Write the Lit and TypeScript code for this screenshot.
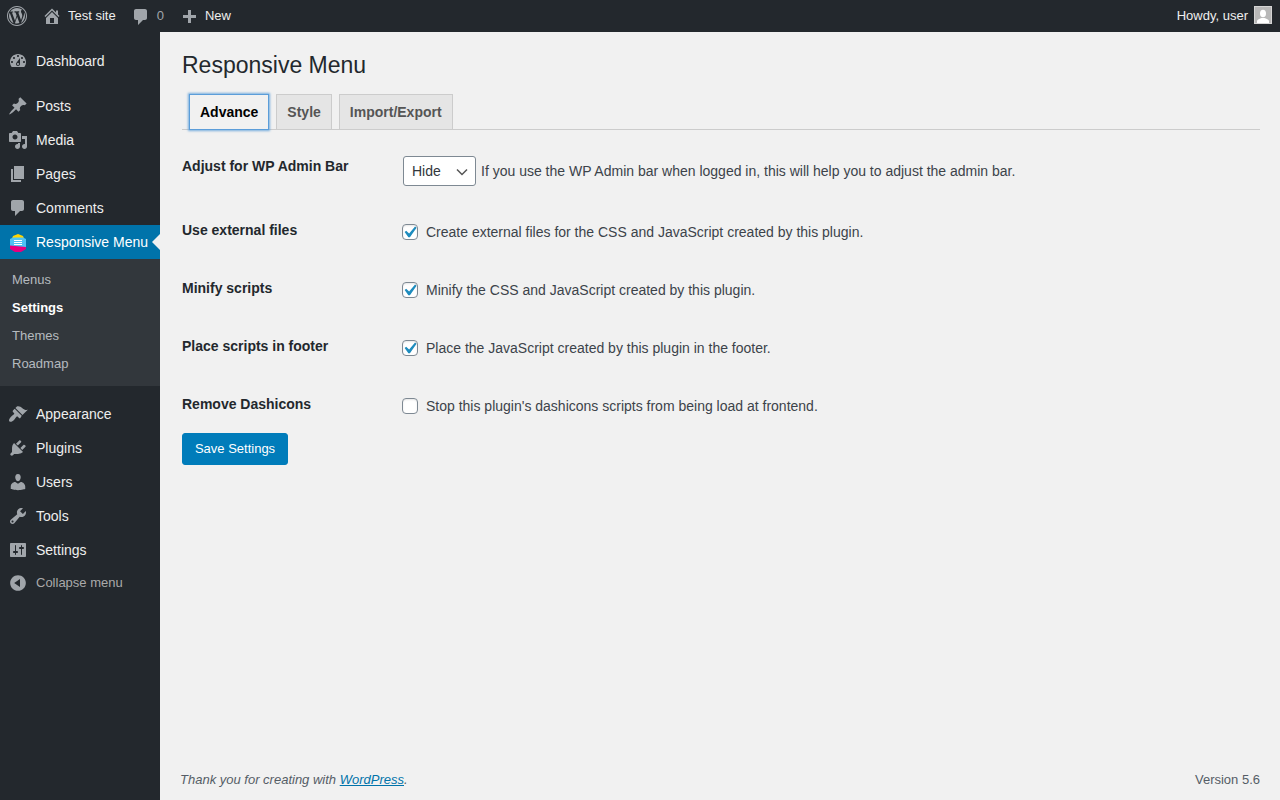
import { LitElement, html, css, svg } from "lit";
import { customElement } from "lit/decorators.js";

const ICONS: Record<string, string> = {
  wp: "M20 10c0-5.52-4.48-10-10-10S0 4.48 0 10s4.48 10 10 10 10-4.48 10-10zM10 1.01c4.96 0 8.99 4.03 8.99 8.99s-4.03 8.99-8.99 8.99S1.01 14.96 1.01 10 5.04 1.01 10 1.01zM8.01 14.82L4.96 6.61c.49-.03 1.05-.08 1.05-.08.43-.05.38-1.01-.06-.99 0 0-1.29.1-2.13.1-.15 0-.33 0-.52-.01 1.44-2.17 3.9-3.6 6.7-3.6 2.09 0 3.99.79 5.41 2.09-.6-.08-1.45.35-1.45 1.42 0 .66.38 1.22.79 1.88.31.54.5 1.22.5 2.21 0 1.34-1.27 4.48-1.27 4.48l-2.71-7.5c.48-.03.75-.16.75-.16.43-.05.38-1.1-.05-1.08 0 0-1.3.11-2.14.11-.78 0-2.11-.11-2.11-.11-.43-.02-.48 1.06-.05 1.08l.84.08 1.12 3.04zm6.02 2.15L16.64 10s.67-1.69.39-3.81c.63 1.14.94 2.42.94 3.81 0 2.96-1.56 5.58-3.94 7.01zM2.68 6.77L6.5 17.25c-2.67-1.3-4.47-4.08-4.47-7.25 0-1.16.2-2.23.65-3.23zm7.45 4.09l2.29 6.25c-.75.27-1.57.42-2.42.42-.72 0-1.41-.11-2.06-.3z",
  home: "M16 8.5l1.53 1.53-1.06 1.06L10 4.62l-6.47 6.47-1.06-1.06L10 2.5l4 4v-2h2v4zm-6-2.46l6 5.99V18H4v-5.97zM12 17v-5H8v5h4z",
  comment: "M5 2h9c1.1 0 2 .9 2 2v7c0 1.1-.9 2-2 2h-2l-5 5v-5H5c-1.1 0-2-.9-2-2V4c0-1.1.9-2 2-2z",
  plus: "M17 7v3h-5v5H9v-5H4V7h5V2h3v5h5z",
  dashboard: "M3.76 16h12.48c1.1-1.37 1.76-3.11 1.76-5 0-4.42-3.58-8-8-8s-8 3.58-8 8c0 1.89.66 3.63 1.76 5zM10 4c.55 0 1 .45 1 1s-.45 1-1 1-1-.45-1-1 .45-1 1-1zM6 6c.55 0 1 .45 1 1s-.45 1-1 1-1-.45-1-1 .45-1 1-1zm8 0c.55 0 1 .45 1 1s-.45 1-1 1-1-.45-1-1 .45-1 1-1zm-5.37 5.55L12 7v6c0 1.1-.9 2-2 2s-2-.9-2-2c0-.57.24-1.08.63-1.45zM4 10c.55 0 1 .45 1 1s-.45 1-1 1-1-.45-1-1 .45-1 1-1zm12 0c.55 0 1 .45 1 1s-.45 1-1 1-1-.45-1-1 .45-1 1-1zm-5 3c0-.55-.45-1-1-1s-1 .45-1 1 .45 1 1 1 1-.45 1-1z",
  post: "M10.44 3.02l1.82-1.82 6.36 6.35-1.83 1.82c-1.05-.68-2.48-.57-3.41.36l-.75.75c-.92.93-1.04 2.35-.35 3.41l-1.83 1.82-2.41-2.41-2.8 2.79c-.42.42-3.38 2.71-3.8 2.29s1.86-3.39 2.28-3.81l2.79-2.79L4.1 9.36l1.83-1.82c1.05.69 2.48.57 3.4-.36l.75-.75c.93-.92 1.05-2.35.36-3.41z",
  media: "M13 11V4c0-.55-.45-1-1-1h-1.67L9 1H5L3.67 3H2c-.55 0-1 .45-1 1v7c0 .55.45 1 1 1h10c.55 0 1-.45 1-1zM7 4.5c1.38 0 2.5 1.12 2.5 2.5S8.38 9.5 7 9.5 4.5 8.38 4.5 7 5.62 4.5 7 4.5zM14 6h5v10.5c0 1.38-1.12 2.5-2.5 2.5S14 17.88 14 16.5s1.12-2.5 2.5-2.5c.17 0 .34.02.5.05V9h-3V6zm-4 8.05V13h2v3.5c0 1.38-1.12 2.5-2.5 2.5S7 17.88 7 16.5 8.12 14 9.5 14c.17 0 .34.02.5.05z",
  page: "M6 15V2h10v13H6zm-1 1h8v2H3V5h2v11z",
  appearance: "M14.48 11.06L7.41 3.99l1.5-1.5c.5-.56 2.3-.47 3.51.32 1.21.8 1.43 1.28 2.91 2.1 1.18.64 2.45 1.26 4.45.85zm-.71.71L6.7 4.7 4.93 6.47c-.39.39-.39 1.02 0 1.41l1.06 1.06c.39.39.39 1.03 0 1.42-.6.6-1.43 1.11-2.21 1.69-.35.26-.7.53-1.01.84-1.43 1.43-2.4 3.41-1.31 4.5 1.09 1.09 3.07.12 4.5-1.31.31-.31.58-.66.84-1.01.58-.78 1.09-1.61 1.69-2.21.39-.39 1.03-.39 1.42 0l1.06 1.06c.39.39 1.02.39 1.41 0z",
  plugin: "M13.11 4.36L9.87 7.6 8 5.73l3.24-3.24c.35-.34 1.05-.2 1.56.32.52.51.66 1.21.31 1.55zm-8 1.77l.91-1.12 9.01 9.01-1.19.84c-.71.71-2.63 1.16-3.82 1.16H6.14L4.9 17.26c-.59.59-1.54.59-2.12 0-.59-.58-.59-1.53 0-2.12l1.24-1.24v-3.88c0-1.13.4-3.19 1.09-3.89zm7.26 3.97l3.24-3.24c.34-.35 1.04-.21 1.55.31.52.51.66 1.21.31 1.55l-3.24 3.25z",
  users: "M10 9.25c-2.27 0-2.73-3.44-2.73-3.44C7 4.02 7.82 2 9.97 2c2.16 0 2.98 2.02 2.71 3.81 0 0-.41 3.44-2.68 3.44zm0 2.57L12.72 10c2.39 0 4.52 2.33 4.52 4.53v2.49s-3.65 1.13-7.24 1.13c-3.65 0-7.24-1.13-7.24-1.13v-2.49c0-2.25 1.94-4.48 4.47-4.48z",
  tools: "M16.68 9.77c-1.34 1.34-3.3 1.67-4.95.99l-5.41 6.52c-.99.99-2.59.99-3.58 0s-.99-2.59 0-3.57l6.52-5.42c-.68-1.65-.35-3.61.99-4.95 1.28-1.28 3.12-1.62 4.72-1.06l-2.89 2.89 2.82 2.82 2.86-2.87c.53 1.58.18 3.39-1.08 4.65zM3.81 16.21c.4.39 1.04.39 1.43 0 .4-.4.4-1.04 0-1.43-.39-.4-1.03-.4-1.43 0-.39.39-.39 1.03 0 1.43z",
  settings: "M18 16V4c0-.55-.45-1-1-1H3c-.55 0-1 .45-1 1v12c0 .55.45 1 1 1h14c.55 0 1-.45 1-1zM8 11h1c.55 0 1 .45 1 1s-.45 1-1 1H8v1.5c0 .28-.22.5-.5.5s-.5-.22-.5-.5V13H6c-.55 0-1-.45-1-1s.45-1 1-1h1V5.5c0-.28.22-.5.5-.5s.5.22.5.5V11zm5-2h-1c-.55 0-1-.45-1-1s.45-1 1-1h1V5.5c0-.28.22-.5.5-.5s.5.22.5.5V7h1c.55 0 1 .45 1 1s-.45 1-1 1h-1v5.5c0 .28-.22.5-.5.5s-.5-.22-.5-.5V9z",
  collapse: "M10 2.16c4.33 0 7.84 3.51 7.84 7.84s-3.51 7.84-7.84 7.84S2.16 14.33 2.16 10 5.71 2.16 10 2.16zm2 11.72V6.12L6.18 9.97z",
};

const icon = (name: string) => html`<svg class="icon" viewBox="0 0 20 20" aria-hidden="true">
  <path fill-rule="evenodd" d=${ICONS[name]}></path>
</svg>`;

const rmIcon = html`<svg class="icon" viewBox="0 0 20 20" aria-hidden="true">
  ${svg`
    <path fill="#ffd400" d="M5 4 10 2l5 2 1 2.500H4z"></path>
    <path fill="#4cc3f5" d="M2 7 5 5.500h10L18 7v8H2z"></path>
    <path fill="#e6007e" d="M2 13.500 18 15v2l-5 3H7l-5-3z"></path>
    <path fill="#fff" d="M6 8h8v1H6zm0 2h8v1H6zm0 2h8v1H6z"></path>
  `}
</svg>`;

const TOP_MENU = [{ label: "Dashboard", icon: "dashboard" }];
const MID_MENU = [
  { label: "Posts", icon: "post" },
  { label: "Media", icon: "media" },
  { label: "Pages", icon: "page" },
  { label: "Comments", icon: "comment" },
];
const LOW_MENU = [
  { label: "Appearance", icon: "appearance" },
  { label: "Plugins", icon: "plugin" },
  { label: "Users", icon: "users" },
  { label: "Tools", icon: "tools" },
  { label: "Settings", icon: "settings" },
];

const OPTIONS = [
  { label: "Use external files", text: "Create external files for the CSS and JavaScript created by this plugin.", checked: true },
  { label: "Minify scripts", text: "Minify the CSS and JavaScript created by this plugin.", checked: true },
  { label: "Place scripts in footer", text: "Place the JavaScript created by this plugin in the footer.", checked: true },
  { label: "Remove Dashicons", text: "Stop this plugin's dashicons scripts from being load at frontend.", checked: false },
];

@customElement("app-root")
export class AppRoot extends LitElement {
  static styles = css`
    :host {
      display: block;
      width: 1280px;
      height: 800px;
      overflow: hidden;
      background: #f1f1f1;
      color: #3c434a;
      font-family: "Liberation Sans", Arial, sans-serif;
      font-size: 14px;
    }
    * {
      box-sizing: border-box;
    }
    .icon {
      display: block;
      width: 20px;
      height: 20px;
      fill: currentColor;
    }

    /* admin bar */
    .adminbar {
      display: flex;
      align-items: center;
      height: 32px;
      background: #23282d;
      color: #eee;
      font-size: 13px;
    }
    .bar-item {
      display: flex;
      align-items: center;
    }
    .bar-item .icon {
      color: #a0a5aa;
    }
    .bar-logo {
      margin-left: 7px;
    }
    .bar-home {
      margin-left: 15px;
    }
    .bar-home span {
      margin-left: 6px;
      transform: translateY(-1px);
    }
    .bar-comments {
      margin-left: 15px;
      color: #a0a5aa;
    }
    .bar-comments .icon {
      transform: translateY(1px);
    }
    .bar-comments span {
      margin-left: 6px;
      transform: translateY(-1px);
    }
    .bar-new {
      margin-left: 15px;
    }
    .bar-new .icon {
      transform: translateY(2px);
    }
    .bar-new span {
      margin-left: 6px;
      transform: translateY(-1px);
    }
    .bar-user {
      margin-left: auto;
      margin-right: 8px;
    }
    .bar-user span {
      transform: translateY(-1px);
    }
    .avatar {
      display: block;
      width: 18px;
      height: 18px;
      margin-left: 6px;
      transform: translateY(-1px);
    }

    .body {
      display: flex;
      height: 768px;
    }

    /* sidebar */
    .sidebar {
      flex: none;
      width: 160px;
      padding-top: 12px;
      background: #23282d;
      color: #eee;
    }
    .menu-item {
      position: relative;
      display: flex;
      align-items: center;
      height: 34px;
    }
    .menu-item .icon {
      flex: none;
      width: 20px;
      height: 20px;
      margin: 0 8px;
      color: #a0a5aa;
    }
    .menu-item.current {
      background: #0073aa;
      color: #fff;
    }
    .menu-item.current::after {
      content: "";
      position: absolute;
      right: 0;
      top: 9px;
      border: 8px solid transparent;
      border-right-color: #f1f1f1;
      border-left-width: 0;
    }
    .separator {
      height: 11px;
    }
    .submenu {
      padding: 7px 0 8px;
      margin-bottom: 11px;
      background: #32373c;
      font-size: 13px;
      color: rgba(240, 245, 250, 0.7);
    }
    .submenu div {
      height: 28px;
      padding-left: 12px;
      line-height: 27px;
    }
    .submenu .current {
      color: #fff;
      font-weight: 700;
    }
    .collapse {
      display: flex;
      align-items: center;
      height: 30px;
      color: #aaa;
      font-size: 13px;
    }
    .collapse .icon {
      flex: none;
      margin: 0 8px;
      color: #a0a5aa;
      transform: translateY(1px);
    }

    /* content */
    .main {
      flex: 1;
      display: flex;
      flex-direction: column;
      padding: 0 20px 0 20px;
    }
    .wrap {
      padding-left: 2px;
    }
    h1 {
      margin: 0;
      padding: 19px 0 13px;
      font-size: 23px;
      font-weight: 400;
      line-height: 29.9px;
      color: #23282d;
    }
    .tabs {
      display: flex;
      align-items: flex-start;
      height: 36px;
      border-bottom: 1px solid #ccc;
    }
    .tab {
      height: 35px;
      margin-left: 7px;
      padding: 0 10px;
      border: 1px solid #ccc;
      border-bottom: 0;
      background: #e5e5e5;
      color: #555;
      font-size: 14px;
      font-weight: 700;
      line-height: 35px;
    }
    .tab.active {
      height: 36px;
      border-color: #5b9dd9;
      border-bottom: 1px solid #5b9dd9;
      background: #f1f1f1;
      color: #000;
      box-shadow: 0 0 2px 1px rgba(91, 157, 217, 0.8);
    }
    .form {
      padding-top: 7px;
    }
    .row {
      display: grid;
      grid-template-columns: 220px 1fr;
      height: 58px;
    }
    .row.first {
      height: 64px;
    }
    .row label {
      padding-top: 20px;
      font-weight: 700;
      line-height: 18px;
      color: #23282d;
    }
    .control {
      display: flex;
      align-items: center;
      height: 16px;
      margin-top: 23px;
    }
    .first .control {
      height: 30px;
      margin-top: 19px;
      padding-left: 1px;
    }
    select {
      appearance: none;
      width: 73px;
      height: 30px;
      margin: 0 5px 0 0;
      padding: 0 24px 0 8px;
      border: 1px solid #7e8993;
      border-radius: 3px;
      background: #fff
        url('data:image/svg+xml;charset=US-ASCII,%3Csvg%20width%3D%2212%22%20height%3D%228%22%20xmlns%3D%22http%3A%2F%2Fwww.w3.org%2F2000%2Fsvg%22%3E%3Cpath%20d%3D%22M1%201.500l5%205%205-5%22%20fill%3D%22none%22%20stroke%3D%22%23555%22%20stroke-width%3D%221.500%22%2F%3E%3C%2Fsvg%3E')
        no-repeat right 7px top 11px / 12px 8px;
      color: #32373c;
      font-family: inherit;
      font-size: 14px;
    }
    input[type="checkbox"] {
      appearance: none;
      flex: none;
      width: 16px;
      height: 16px;
      margin: 0 8px 0 0;
      border: 1px solid #7e8993;
      border-radius: 4px;
      background: #fff;
      box-shadow: inset 0 1px 2px rgba(0, 0, 0, 0.1);
    }
    input[type="checkbox"]:checked {
      background: #fff
        url('data:image/svg+xml;utf8,%3Csvg%20xmlns%3D%22http%3A%2F%2Fwww.w3.org%2F2000%2Fsvg%22%20viewBox%3D%220%200%2020%2020%22%3E%3Cpath%20d%3D%22M14.83%204.89l1.34.94-5.81%208.38H9.02L5.78%209.67l1.34-1.25%202.57%202.4z%22%20fill%3D%22%231e8cbe%22%2F%3E%3C%2Fsvg%3E')
        no-repeat -5px -4px / 23px 23px;
    }
    .save {
      display: block;
      width: 106px;
      height: 32px;
      padding: 0;
      border: 1px solid #007cba;
      border-radius: 3px;
      background: #007cba;
      color: #fff;
      font-family: inherit;
      font-size: 13px;
    }

    /* footer */
    .footer {
      display: flex;
      justify-content: space-between;
      margin-top: auto;
      padding-bottom: 11px;
      font-size: 13px;
      line-height: 18px;
      color: #555d66;
    }
    .footer em a {
      color: #0073aa;
    }
  `;

  private renderItem(item: { label: string; icon: string }) {
    return html`<div class="menu-item">${icon(item.icon)}<span>${item.label}</span></div>`;
  }

  render() {
    return html`
      <header class="adminbar">
        <div class="bar-item bar-logo">${icon("wp")}</div>
        <div class="bar-item bar-home">${icon("home")}<span>Test site</span></div>
        <div class="bar-item bar-comments">${icon("comment")}<span>0</span></div>
        <div class="bar-item bar-new">${icon("plus")}<span>New</span></div>
        <div class="bar-item bar-user">
          <span>Howdy, user</span>
          <svg class="avatar" viewBox="0 0 18 18" aria-hidden="true">
            <rect width="18" height="18" fill="#d4d4d4"></rect>
            <rect x="1" y="1" width="16" height="16" fill="#b8b8b8"></rect>
            <ellipse cx="9" cy="7.500" rx="3" ry="3.800" fill="#fff"></ellipse>
            <path fill="#fff" d="M3 17v-2c0-1.500 3-2.500 4.500-3h3c1.500.5 4.500 1.500 4.500 3v2z"></path>
          </svg>
        </div>
      </header>
      <div class="body">
        <nav class="sidebar">
          ${TOP_MENU.map((i) => this.renderItem(i))}
          <div class="separator"></div>
          ${MID_MENU.map((i) => this.renderItem(i))}
          <div class="menu-item current">${rmIcon}<span>Responsive Menu</span></div>
          <div class="submenu">
            <div>Menus</div>
            <div class="current">Settings</div>
            <div>Themes</div>
            <div>Roadmap</div>
          </div>
          ${LOW_MENU.map((i) => this.renderItem(i))}
          <div class="collapse">${icon("collapse")}<span>Collapse menu</span></div>
        </nav>
        <main class="main">
          <div class="wrap">
            <h1>Responsive Menu</h1>
            <div class="tabs">
              <div class="tab active">Advance</div>
              <div class="tab">Style</div>
              <div class="tab">Import/Export</div>
            </div>
            <div class="form">
              <div class="row first">
                <label>Adjust for WP Admin Bar</label>
                <div class="control">
                  <select><option>Hide</option><option>Show</option></select>
                  <span>If you use the WP Admin bar when logged in, this will help you to adjust the admin bar.</span>
                </div>
              </div>
              ${OPTIONS.map(
                (o) => html`<div class="row">
                  <label>${o.label}</label>
                  <div class="control">
                    <input type="checkbox" .checked=${o.checked} />
                    <span>${o.text}</span>
                  </div>
                </div>`
              )}
              <button class="save">Save Settings</button>
            </div>
          </div>
          <footer class="footer">
            <em>Thank you for creating with <a href="#">WordPress</a>.</em>
            <span>Version 5.6</span>
          </footer>
        </main>
      </div>
    `;
  }
}
